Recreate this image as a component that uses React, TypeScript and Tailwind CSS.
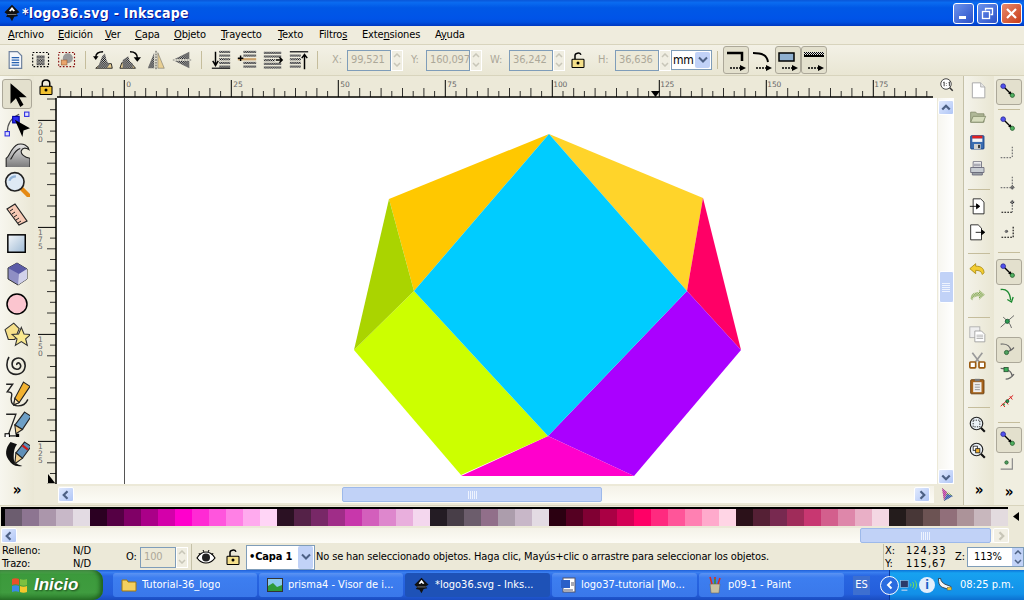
import React from 'react';

const FONT = "[font-family:'DejaVu_Sans_Condensed','DejaVu_Sans',sans-serif]";

// paleta de colores, tal cual aparece abajo
const PALETTE = [
  '#6c5d6f', '#8d7591', '#ab96ab', '#c8b8c8', '#e3dbe3',
  '#2b0022', '#550044', '#800066', '#aa0088', '#d400aa', '#ff00cc', '#ff2ad4', '#ff55dd', '#ff80e5', '#ffaaee', '#ffd5f6',
  '#2b1123', '#552248', '#782867', '#a02d88', '#c837ab', '#d35fbc', '#de87cd', '#e9afdd', '#f4d7ee',
  '#241c24', '#483e48', '#6c5d6c', '#916f8a', '#ac9dac', '#c8b7c8', '#e3dbe3',
  '#2b0011', '#550022', '#800033', '#aa0044', '#d40055', '#ff0066', '#ff2a7f', '#ff5599', '#ff80b2', '#ffaacc', '#ffd5e5',
  '#2b1119', '#552035', '#782950', '#a02c5a', '#c83771', '#d35f8d', '#de87aa', '#e9afc6', '#f4d7e3',
  '#241c1c', '#483737', '#6c5353', '#916f7a', '#ac9399', '#c8b7bd', '#e3dbdf',
];

const MENUS: [string, string, string, number][] = [
  ['', 'A', 'rchivo', 50],
  ['', 'E', 'dición', 47],
  ['', 'V', 'er', 30],
  ['', 'C', 'apa', 39],
  ['', 'O', 'bjeto', 47],
  ['', 'T', 'rayecto', 57],
  ['', 'T', 'exto', 41],
  ['Filtro', 's', '', 43],
  ['Exte', 'n', 'siones', 73],
  ['A', 'y', 'uda', 40],
];

const Svg = ({ s = 24, children, vb = '0 0 24 24' }: { s?: number; children: React.ReactNode; vb?: string }) => (
  <svg width={s} height={s} viewBox={vb} fill="none" className="block shrink-0">
    {children}
  </svg>
);

// --- iconos barra de comandos de arriba ---
const DocIcon = () => (
  <Svg s={20}>
    <path d="M5 2h10l5 5v15H5z" fill="#f4f6fa" stroke="#6b7f9c" strokeWidth="1.4" />
    <path d="M8 9h9M8 12h9M8 15h9M8 18h9" stroke="#2460b0" strokeWidth="1.5" />
  </Svg>
);
const SelAll = () => (
  <Svg s={20}>
    <rect x="2" y="3" width="19" height="17" stroke="#000" strokeWidth="1.4" strokeDasharray="2 2" />
    <path d="M7 7h9v3H7zM7 11h9v3H7zM7 15h9v3H7z" fill="url(#dither)" stroke="#555" strokeWidth=".5" />
  </Svg>
);
const SelDrawing = () => (
  <Svg s={20}>
    <rect x="2" y="3" width="19" height="17" stroke="#8a1010" strokeWidth="1.4" strokeDasharray="2 2" />
    <circle cx="13" cy="10" r="6" fill="#9a9a9a" />
    <rect x="5" y="12" width="7" height="6" fill="#e9a56c" stroke="#8a4a20" strokeWidth=".6" />
  </Svg>
);
const RotL = () => (
  <Svg s={22}>
    <path d="M3 21l6-5h11l1 5z" fill="#e8cf93" stroke="#222" />
    <path d="M5 21l5-13 3-3 2 8 3 4-3 4z" fill="url(#dither)" />
    <path d="M11 3C6 3 3 5 3 9" stroke="#000" strokeWidth="1.5" />
    <path d="M0 8h6l-3 4z" fill="#000" />
  </Svg>
);
const RotR = () => (
  <Svg s={22}>
    <path d="M1 21l2-6h10l5 6z" fill="#e8cf93" stroke="#222" />
    <path d="M4 21V12l6-4 2 6 3 2v5z" fill="url(#dither)" />
    <path d="M12 3c5 0 8 2 8 7" stroke="#000" strokeWidth="1.5" />
    <path d="M16 9h8l-4 5z" fill="#000" />
  </Svg>
);
const FlipH = () => (
  <Svg s={22}>
    <path d="M10 4v17H3z" fill="url(#dither)" />
    <path d="M14 4v17h7z" fill="#e8cf93" stroke="#555" strokeWidth=".5" />
    <path d="M12 2v20" stroke="#333" strokeDasharray="2 1" />
  </Svg>
);
const FlipV = () => (
  <Svg s={22}>
    <path d="M20 3v8H4z" fill="url(#dither)" />
    <path d="M20 21v-8H4z" fill="url(#dither)" />
    <path d="M2 12h20" stroke="#777" strokeDasharray="2 1" />
  </Svg>
);
const Lines = ({ x, w, ys }: { x: number; w: number; ys: number[] }) => (
  <>
    {ys.map((y) => (
      <rect key={y} x={x} y={y} width={w} height="2.4" fill="url(#dither)" />
    ))}
  </>
);
const Raise = () => (
  <Svg s={22}>
    <Lines x={10} w={12} ys={[2, 6, 10, 14, 18]} />
    <path d="M2 21h20" stroke="#333" strokeWidth="1.6" />
    <path d="M6 3v14M3 13l3 5 3-5" stroke="#000" strokeWidth="1.6" />
  </Svg>
);
const Lower = () => (
  <Svg s={22}>
    <Lines x={8} w={14} ys={[2, 6, 14, 18]} />
    <rect x="2" y="10" width="20" height="2.4" fill="#c9a06a" />
    <path d="M2 10h6M5 7v6" stroke="#000" strokeWidth="1.6" />
  </Svg>
);
const Up1 = () => (
  <Svg s={22}>
    <Lines x={2} w={19} ys={[3, 7, 15, 19]} />
    <Lines x={2} w={12} ys={[11]} />
    <path d="M15 12h7M19 9l3 3-3 3" stroke="#000" strokeWidth="1.6" />
  </Svg>
);
const Top = () => (
  <Svg s={22}>
    <path d="M2 3h20" stroke="#333" strokeWidth="1.6" />
    <Lines x={2} w={12} ys={[6, 10, 14, 18]} />
    <path d="M18 22V7M15 10l3-4 3 4" stroke="#000" strokeWidth="1.6" />
  </Svg>
);
const Padlock = ({ open = false }: { open?: boolean }) => (
  <Svg s={18}>
    <path d={open ? 'M8 12V6c0-3 6-5 8-1' : 'M7 12V7c0-6 10-6 10 0v5'} stroke="#000" strokeWidth="2" />
    <rect x="4" y="11" width="16" height="11" rx="1" fill={open ? '#f5e08a' : '#f2c230'} stroke="#000" strokeWidth="1.4" />
    <circle cx="12" cy="16" r="2" fill="#000" />
  </Svg>
);
const PathAB = ({ top, mid }: { top: React.ReactNode; mid?: boolean }) => (
  <Svg s={24}>
    {top}
    {mid && <path d="M2 4h20v3H2z" fill="url(#dither)" />}
    <path d="M6 20h12" stroke="#000" strokeWidth="1.6" strokeDasharray="2 1" />
    <path d="M16 17l6 3-6 3z" fill="#000" />
  </Svg>
);

// --- iconos caja de herramientas ---
const Arrow = () => (
  <Svg s={26}>
    <path d="M6 2v19l5-5 4 8 3-2-4-7h7z" fill="#000" />
  </Svg>
);
const Node = () => (
  <Svg s={26}>
    <path d="M3 20C3 11 7 6 14 3" stroke="#555" strokeWidth="1.2" />
    <rect x="8" y="5" width="6" height="6" fill="#2c2cf0" stroke="#0000a0" />
    <rect x="1" y="19" width="4" height="4" fill="#dfe0ff" stroke="#3030e0" />
    <rect x="19" y="1" width="4" height="4" fill="#dfe0ff" stroke="#3030e0" />
    <path d="M10 8l14 8-6 2-1 6z" fill="#000" />
  </Svg>
);
const Tweak = () => (
  <Svg s={26}>
    <defs>
      <linearGradient id="tw" x1="0" y1="0" x2="0" y2="1">
        <stop offset="0" stopColor="#e8e8e8" />
        <stop offset="1" stopColor="#777" />
      </linearGradient>
    </defs>
    <path d="M2 25V16C5 15 6 6 13 3c5-1 9 1 10 5-3-2-6-2-7 1s3 6 8 7v9z" fill="url(#tw)" stroke="#222" strokeWidth="1" />
    <path d="M6 17c2-2 3-8 9-10" stroke="#222" strokeWidth="1" />
  </Svg>
);
const ZoomTool = () => (
  <Svg s={26}>
    <path d="M15 15l8 8" stroke="#e58a14" strokeWidth="4" strokeLinecap="round" />
    <circle cx="10" cy="10" r="8.5" fill="#dfeaf5" stroke="#222" strokeWidth="1.5" />
    <path d="M5 9c1-3 3-4 6-4" stroke="#8fb1d6" strokeWidth="2" />
  </Svg>
);
const RulerTool = () => (
  <Svg s={24}>
    <path d="M2 7l8-5 12 17-8 4z" fill="#f6c9b4" stroke="#222" strokeWidth="1.2" />
    <path d="M5 9l3-2M7 12l3-2M9 15l3-2M11 18l3-2M13 21l3-2" stroke="#222" />
  </Svg>
);
const RectTool = () => (
  <Svg s={22}>
    <defs>
      <linearGradient id="rc" x1="0" y1="0" x2="1" y2="1">
        <stop offset="0" stopColor="#f4f7fb" />
        <stop offset="1" stopColor="#9db9d4" />
      </linearGradient>
    </defs>
    <rect x="2" y="2" width="19" height="19" fill="url(#rc)" stroke="#000" strokeWidth="1.6" />
  </Svg>
);
const BoxTool = () => (
  <Svg s={24}>
    <path d="M12 1l10 6v10l-9 6-10-6V6z" fill="#8f8fc4" stroke="#333" />
    <path d="M3 6l9-5 10 6-8 5z" fill="#5b5ba6" />
    <path d="M14 12l8-5v10l-9 6z" fill="#d2d2ea" />
  </Svg>
);
const CircleTool = () => (
  <Svg s={24}>
    <circle cx="12" cy="12" r="10" fill="#fbc5cf" stroke="#000" strokeWidth="1.5" />
  </Svg>
);
const StarTool = () => (
  <Svg s={26}>
    <path d="M1 8l8-6 5 5-4 10-6 0z" fill="#f6e08a" stroke="#333" />
    <path d="M16 6l2.5 6 6 .5-4.5 4 1.5 6-5.5-3.5-5.500 3.500 1.500-6-4.500-4 6-.5z" fill="#f9e88e" stroke="#333" />
  </Svg>
);
const Spiral = () => (
  <Svg s={24}>
    <path d="M12 13c-1-2 2-3 3-1 2 3-1 6-4 5-5-1-5-8-1-10 6-3 11 2 10 8-1 7-9 9-14 6C1 18 1 10 4 5" stroke="#222" strokeWidth="1.6" />
  </Svg>
);
const Pencil = () => (
  <Svg s={26}>
    <path d="M2 3h6L3 10c3 0 5 1 4 4s-1 9 6 9 8-4 9-6" stroke="#222" strokeWidth="1.3" />
    <path d="M18 1l6 4-10 15-5 2 1-6z" fill="#f2b230" stroke="#222" />
    <path d="M9 22l1-6 4 4z" fill="#f8e5c0" stroke="#222" />
  </Svg>
);
const Pen = () => (
  <Svg s={26}>
    <path d="M2 3h9L4 22" stroke="#222" strokeWidth="1.2" />
    <rect x="1" y="21" width="4" height="4" fill="#fff" stroke="#000" />
    <rect x="11" y="21" width="3" height="3" fill="#000" />
    <path d="M5 23h7" stroke="#000" />
    <path d="M19 1l6 4-8 12-7-4z" fill="#6d9fc6" stroke="#222" />
    <path d="M10 13l7 4-6 4z" fill="#f0d090" stroke="#222" />
  </Svg>
);
const Calli = () => (
  <Svg s={26}>
    <path d="M6 1c-5 6-5 12-2 16s5 7 13 6c-5-1-8-3-8-7 0-5 0-9 3-13z" fill="#111" />
    <path d="M19 1l6 4-8 11-6-5z" fill="#5f8fb8" stroke="#222" />
    <path d="M17 4l5 4" stroke="#d01818" strokeWidth="2" />
    <path d="M11 11l6 5-7 5z" fill="#f0d090" stroke="#222" />
  </Svg>
);
const Chevrons = () => <span className="block text-[15px] font-bold leading-none text-black">»</span>;

// --- iconos columna derecha ---
const NewDoc = () => (
  <Svg s={20}>
    <path d="M4 1h10l5 5v13H4z" fill="#fff" stroke="#aaa" strokeWidth="1.2" />
    <path d="M14 1v5h5" fill="#e8e8e8" stroke="#aaa" />
  </Svg>
);
const Folder = () => (
  <Svg s={20}>
    <path d="M2 5h6l2 2h8v10H2z" fill="#b0b898" stroke="#808868" />
    <path d="M2 17l3-7h15l-3 7z" fill="#d6dcbc" stroke="#808868" />
  </Svg>
);
const Save = () => (
  <Svg s={20}>
    <rect x="2" y="2" width="16" height="16" rx="1" fill="#3a6cb0" stroke="#123a80" />
    <rect x="4" y="2" width="12" height="3.500" fill="#e02020" />
    <rect x="4" y="5.500" width="12" height="4" fill="#f4f4f4" />
    <rect x="6" y="12" width="8" height="6" fill="#d0d0d0" />
    <rect x="11" y="13" width="2" height="4" fill="#222" />
  </Svg>
);
const Print = () => (
  <Svg s={20}>
    <path d="M5 2h10v7H5z" fill="#fff" stroke="#667" />
    <path d="M6 5h8M6 7h8" stroke="#667" />
    <path d="M2 9h16v6H2z" fill="#c8cdd2" stroke="#667" />
    <path d="M4 15h12v3H4z" fill="#9aa0a6" stroke="#667" />
  </Svg>
);
const Import = () => (
  <Svg s={20}>
    <path d="M5 1h9l4 4v14H5z" fill="#fff" stroke="#111" />
    <path d="M1 10h11M9 7l4 3-4 3z" stroke="#000" fill="#000" />
  </Svg>
);
const Export = () => (
  <Svg s={20}>
    <path d="M2 1h9l4 4v14H2z" fill="#fff" stroke="#111" />
    <path d="M8 10h10M15 7l4 3-4 3z" stroke="#000" fill="#000" />
  </Svg>
);
const Undo = () => (
  <Svg s={20}>
    <path d="M8 2L1 8l7 6v-4c4 0 7 1 8 5l2-2c0-6-4-8-10-8z" fill="#f2cc30" stroke="#a88810" />
  </Svg>
);
const Redo = () => (
  <Svg s={20}>
    <path d="M12 2l7 6-7 6v-4c-4 0-7 1-8 5l-2-2c0-6 4-8 10-8z" fill="url(#ditherg)" />
  </Svg>
);
const Copy = () => (
  <Svg s={20}>
    <rect x="1" y="1" width="12" height="13" fill="#eee" stroke="#aaa" />
    <path d="M7 6h8l4 4v9H7z" fill="#fff" stroke="#999" />
    <path d="M9 11h8M9 13h8M9 15h8" stroke="#aaa" />
  </Svg>
);
const Cut = () => (
  <Svg s={20}>
    <path d="M4 1l9 12M16 1L7 13" stroke="#9a9a9a" strokeWidth="2" />
    <rect x="1" y="12" width="7" height="7" rx="1" fill="#fff" stroke="#9a5a10" strokeWidth="2" />
    <rect x="12" y="12" width="7" height="7" rx="1" fill="#fff" stroke="#9a5a10" strokeWidth="2" />
  </Svg>
);
const Paste = () => (
  <Svg s={20}>
    <rect x="2" y="2" width="16" height="17" rx="1" fill="#a8641c" stroke="#603608" />
    <rect x="5" y="5" width="10" height="12" fill="#eee" />
    <rect x="7" y="1" width="6" height="3" fill="#777" />
    <path d="M7 8h6M7 11h6M7 14h6" stroke="#888" />
  </Svg>
);
const ZoomSel = () => (
  <Svg s={20}>
    <path d="M13 13l6 6" stroke="#111" strokeWidth="2.500" />
    <circle cx="9" cy="9" r="7.500" fill="#eaf1f7" stroke="#222" strokeWidth="1.400" />
    <rect x="5" y="5" width="8" height="8" stroke="#000" strokeDasharray="1.500 1.500" />
  </Svg>
);
const ZoomDraw = () => (
  <Svg s={20}>
    <path d="M13 13l6 6" stroke="#111" strokeWidth="2.500" />
    <circle cx="9" cy="9" r="7.500" fill="#eaf1f7" stroke="#222" strokeWidth="1.400" />
    <rect x="5" y="5" width="5" height="5" fill="#fff" stroke="#222" />
    <rect x="8" y="8" width="5" height="5" fill="#f2b230" stroke="#222" />
  </Svg>
);
const Zoom11 = () => (
  <Svg s={18}>
    <path d="M12 12l5 5" stroke="#333" strokeWidth="2" />
    <circle cx="8" cy="8" r="7" fill="#fff" stroke="#333" strokeWidth="1.200" />
    <path d="M4.500 6l1-.8V11M11.500 6l1-.8V11M8.500 7v.8M8.500 9.500v.8" stroke="#000" strokeWidth="1" />
  </Svg>
);

// iconos de ajuste (snap)
const SnapMain = () => (
  <Svg s={20}>
    <path d="M6 6l9 9" stroke="#000" strokeWidth="1.600" />
    <path d="M11 14l5 2-2-5z" fill="#000" />
    <circle cx="5" cy="5" r="2.800" fill="#5050f0" stroke="#303090" />
    <circle cx="16" cy="16" r="2.500" fill="#50b060" stroke="#286030" />
  </Svg>
);
const SnapDots = ({ d }: { d: number }) => (
  <Svg s={20}>
    {d === 0 && <path d="M2 15h13M16 2v13" stroke="#777" strokeWidth="1.500" strokeDasharray="2 1.500" />}
    {d === 1 && (
      <>
        <path d="M2 15h13M16 2v13" stroke="#777" strokeWidth="1.500" strokeDasharray="2 1.500" />
        <path d="M16 12l3 3-3 3-3-3z" fill="url(#dither)" />
      </>
    )}
    {d === 2 && (
      <>
        <path d="M3 17h13" stroke="#000" strokeWidth="1.300" strokeDasharray="2 1.500" />
        <path d="M16 5v12" stroke="#777" strokeWidth="1.500" strokeDasharray="2 1.500" />
        <path d="M16 2l3 3-3 3-3-3z" fill="url(#dither)" />
      </>
    )}
    {d === 3 && (
      <>
        <path d="M3 17h14V4" stroke="#000" strokeWidth="1.300" strokeDasharray="2 1.500" />
        <circle cx="9" cy="10" r="2" fill="url(#dither)" />
      </>
    )}
  </Svg>
);
const SnapCurve = ({ k }: { k: number }) => (
  <Svg s={20}>
    {k === 0 && (
      <>
        <path d="M2 3c7-1 11 3 12 13" stroke="#1c8a30" strokeWidth="1.600" />
        <path d="M17 12l-2 6-5-3" stroke="#1c8a30" strokeWidth="1.600" />
      </>
    )}
    {k === 1 && (
      <>
        <path d="M2 17L18 3M5 5c4 3 9 8 10 13" stroke="#555" strokeWidth="1" />
        <circle cx="10" cy="10" r="2.500" fill="#2c9a50" stroke="#185030" />
      </>
    )}
    {k === 2 && (
      <>
        <path d="M2 5c8-1 12 3 12 8M9 14c3 0 6-2 9-5" stroke="#666" strokeWidth="1.400" />
        <circle cx="9" cy="15" r="2.500" fill="#50a060" stroke="#286030" />
      </>
    )}
    {k === 3 && (
      <>
        <path d="M2 4c8 0 14 4 14 10M8 17c3 0 7-2 10-6" stroke="#666" strokeWidth="1.400" />
        <rect x="6" y="3" width="5" height="5" fill="#3cae58" stroke="#285030" />
      </>
    )}
    {k === 4 && (
      <>
        <path d="M2 17L17 4M4 14l3 4M8 11l3 4M13 5l3 4" stroke="#d82020" strokeWidth="1.200" />
        <circle cx="10" cy="11" r="1.800" fill="#2c9a50" stroke="#185030" />
        <circle cx="6" cy="15" r="1.200" fill="#2c9a50" />
      </>
    )}
    {k === 5 && (
      <>
        <path d="M2 17h14V4" stroke="#888" strokeWidth="1.400" />
        <circle cx="9" cy="9" r="2" fill="#50a060" stroke="#286030" />
      </>
    )}
  </Svg>
);

const Logo = ({ s = 18 }: { s?: number }) => (
  <Svg s={s}>
    <path d="M12 1l10 10-4 2 2 3-5 1-3 6-3-5-5-1 2-3-4-3z" fill="#111" />
    <path d="M12 4l-4 5 2 1 2-2 2 2 2-1z" fill="#fff" />
    <path d="M6 14h12" stroke="#999" strokeWidth="1" />
  </Svg>
);

const Btn = ({ pressed, children, className }: { pressed?: boolean; children: React.ReactNode; className?: string }) => (
  <div
    className={`flex shrink-0 items-center justify-center rounded-[3px] ${
      pressed ? 'border border-[#aca899] bg-[#e3e0cd]' : 'border border-transparent'
    } ${className ?? ''}`}
  >
    {children}
  </div>
);

const Sep = () => <div className="h-[18px] w-[1px] bg-[#c5bd9c]" />;
const HSep = () => <div className="h-[1px] w-[22px] bg-[#c5bd9c]" />;

const Spin = ({ value, w = 44 }: { value: string; w?: number }) => (
  <div className="flex h-[21px] items-stretch">
    <div
      className="flex items-center border border-[#7f9db9] bg-[#ece9d8] pl-[3px] text-[#aca899]"
      style={{ width: w }}
    >
      {value}
    </div>
    <div className="flex w-[12px] flex-col items-center justify-around border border-white bg-[#f0eee2] text-[#c8c6b8]">
      <svg width="8" height="5" viewBox="0 0 8 5"><path d="M1 4l3-3 3 3" stroke="currentColor" strokeWidth="1.500" fill="none" /></svg>
      <svg width="8" height="5" viewBox="0 0 8 5"><path d="M1 1l3 3 3-3" stroke="currentColor" strokeWidth="1.500" fill="none" /></svg>
    </div>
  </div>
);

const ChevBtn = ({ dir, off, className }: { dir: 'up' | 'down' | 'left' | 'right'; off?: boolean; className?: string }) => {
  const d = { up: 'M3 10l5-5 5 5', down: 'M3 6l5 5 5-5', left: 'M10 3l-5 5 5 5', right: 'M6 3l5 5-5 5' }[dir];
  return (
    <div
      className={`flex h-[15px] w-[16px] shrink-0 items-center justify-center rounded-[2px] border border-white ${
        off ? 'bg-[#f1efe4]' : 'bg-[linear-gradient(135deg,#e1eafe,#b0c6f6)]'
      } ${className ?? ''}`}
    >
      <svg width="12" height="12" viewBox="0 0 16 16">
        <path d={d} stroke={off ? '#c8c6b8' : '#4d6185'} strokeWidth="3" fill="none" />
      </svg>
    </div>
  );
};

const RulerTop = () => {
  const ticks = Array.from({ length: 83 }, (_, i) => i);
  const labels: [number, string][] = [
    [124.3, '0'], [231.3, '25'], [338.3, '50'], [445.3, '75'], [551.3, '100'], [658.3, '125'], [765.3, '150'], [872.3, '175'],
  ];
  return (
    <svg width="876" height="22" viewBox="57 76 876 22" className="block shrink-0">
      <path d="M57 97h876" stroke="#000" strokeWidth="1.500" />
      {ticks.map((i) => {
        const x = 60.1 + i * 10.7;
        const n = Math.round((x - 124.3) / 10.7);
        const major = ((n % 10) + 10) % 10 === 0;
        const mid = ((n % 2) + 2) % 2 === 0;
        return <path key={i} d={`M${x} 97V${major ? 80 : mid ? 88 : 91}`} stroke="#000" strokeWidth={major ? 1 : 0.8} />;
      })}
      {labels.map(([x, t]) => (
        <text key={t} x={x + 2} y={87} fontSize="7.500" fill="#666" fontFamily="DejaVu Sans">{t}</text>
      ))}
      <path d="M651 91h9l-4.500 6z" fill="#000" />
    </svg>
  );
};

const RulerLeft = () => {
  const ticks = Array.from({ length: 37 }, (_, i) => i);
  const labels: [number, string[]][] = [
    [120, ['2', '0', '0']], [227, ['1', '7', '5']], [334, ['1', '5', '0']], [441, ['1', '2', '5']],
  ];
  return (
    <svg width="23" height="386" viewBox="34 98 23 386" className="block shrink-0">
      <path d="M56 98v386" stroke="#000" strokeWidth="1.500" />
      {ticks.map((i) => {
        const y = 99 + i * 10.7;
        const n = Math.round((y - 120) / 10.7);
        const major = ((n % 10) + 10) % 10 === 0;
        const mid = ((n % 2) + 2) % 2 === 0;
        return <path key={i} d={`M56 ${y}H${major ? 38 : mid ? 47 : 50}`} stroke="#000" strokeWidth={major ? 1 : 0.8} />;
      })}
      {labels.map(([y, t]) =>
        t.map((c, i) => (
          <text key={`${y}${i}`} x={38} y={y + 8 + i * 7} fontSize="7.500" fill="#666" fontFamily="DejaVu Sans">{c}</text>
        )),
      )}
      <path d="M48 474l7 9h-7z" fill="#000" />
    </svg>
  );
};

const TaskBtn = ({ w, active, icon, label }: { w: number; active?: boolean; icon: React.ReactNode; label: string }) => (
  <div
    className={`flex h-[24px] shrink-0 items-center gap-[5px] rounded-[3px] pl-[8px] text-white ${
      active ? 'bg-[#1e52b7]' : 'bg-[linear-gradient(180deg,#5b93f3,#3d7ef0_20%,#3a78ea)]'
    }`}
    style={{ width: w }}
  >
    {icon}
    <span className="truncate">{label}</span>
  </div>
);

const Grip = () => (
  <div className="h-[8px] w-[9px] bg-[repeating-linear-gradient(90deg,#eef3fe_0_1px,transparent_1px_2px)]" />
);

export default function App() {
  return (
    <div className={`flex h-[600px] w-[1024px] flex-col overflow-hidden bg-[#ece9d8] text-[11px] tracking-[-0.15px] text-black ${FONT}`}>
      <svg className="absolute h-0 w-0">
        <defs>
          <pattern id="dither" width="2" height="2" patternUnits="userSpaceOnUse">
            <rect width="2" height="2" fill="#ddd" />
            <rect width="1" height="1" fill="#000" />
            <rect x="1" y="1" width="1" height="1" fill="#000" />
          </pattern>
          <pattern id="ditherg" width="2" height="2" patternUnits="userSpaceOnUse">
            <rect width="2" height="2" fill="#6c9a3a" />
            <rect width="1" height="1" fill="#e8e8d0" />
            <rect x="1" y="1" width="1" height="1" fill="#e8e8d0" />
          </pattern>
        </defs>
      </svg>

      {/* barra de titulo */}
      <div className="flex h-[26px] shrink-0 items-center bg-[linear-gradient(180deg,#0a56d8_0%,#0a6bf0_10%,#0058e6_30%,#0054e8_70%,#0050e0_85%,#0038c0_100%)] pl-[3px]">
        <Logo />
        <span className="ml-[1px] flex-1 text-[14px] font-bold tracking-[0.25px] text-white [text-shadow:1px_1px_#0f1089]">*logo36.svg - Inkscape</span>
        <div className="flex items-center gap-[3px] pr-[2px]">
          <div className="relative h-[21px] w-[21px] rounded-[3px] border border-white bg-[linear-gradient(135deg,#6d93ec,#2a50c8)]">
            <div className="absolute bottom-[4px] left-[5px] h-[3px] w-[7px] bg-white" />
          </div>
          <div className="flex h-[21px] w-[21px] items-center justify-center rounded-[3px] border border-white bg-[linear-gradient(135deg,#6d93ec,#2a50c8)]">
            <svg width="13" height="13" viewBox="0 0 13 13" fill="none">
              <path d="M4.500 3.500V1.500h7v6h-2" stroke="#fff" strokeWidth="1.300" />
              <rect x="1.500" y="4.500" width="7" height="7" stroke="#fff" strokeWidth="1.300" />
            </svg>
          </div>
          <div className="flex h-[21px] w-[21px] items-center justify-center rounded-[3px] border border-white bg-[linear-gradient(135deg,#e88a6c,#c83c18)]">
            <svg width="13" height="13" viewBox="0 0 13 13"><path d="M2 2l9 9M11 2l-9 9" stroke="#fff" strokeWidth="2.200" /></svg>
          </div>
        </div>
      </div>

      {/* menu */}
      <div className="flex h-[19px] shrink-0 items-center border-b border-[#d8d4bd] bg-[#efecdd] pl-[8px]">
        {MENUS.map(([a, u, b, w]) => (
          <span key={a + u + b} className="shrink-0" style={{ width: w }}>
            {a}
            <span className="underline">{u}</span>
            {b}
          </span>
        ))}
      </div>

      {/* barra de comandos */}
      <div className="flex h-[31px] shrink-0 items-center border-b border-[#d8d4bd] bg-[linear-gradient(180deg,#f3f1e6,#e9e6d3)] pl-[2px]">
        <div className="flex w-[26px] justify-center"><DocIcon /></div>
        <div className="flex w-[26px] justify-center"><SelAll /></div>
        <div className="flex w-[26px] justify-center"><SelDrawing /></div>
        <div className="mx-[5px]"><Sep /></div>
        <div className="flex w-[26px] justify-center"><RotL /></div>
        <div className="flex w-[26px] justify-center"><RotR /></div>
        <div className="flex w-[26px] justify-center"><FlipH /></div>
        <div className="flex w-[26px] justify-center"><FlipV /></div>
        <div className="mx-[6px]"><Sep /></div>
        <div className="flex w-[26px] justify-center"><Raise /></div>
        <div className="flex w-[26px] justify-center"><Lower /></div>
        <div className="flex w-[26px] justify-center"><Up1 /></div>
        <div className="flex w-[26px] justify-center"><Top /></div>
        <div className="mx-[5px]"><Sep /></div>
        <span className="ml-[9px] w-[15px] text-[#aca899]">X:</span>
        <Spin value="99,521" />
        <span className="ml-[8px] w-[15px] text-[#aca899]">Y:</span>
        <Spin value="160,097" />
        <span className="ml-[8px] w-[19px] text-[#aca899]">W:</span>
        <Spin value="36,242" />
        <div className="ml-[2px] flex w-[22px] justify-center"><Padlock open /></div>
        <span className="ml-[9px] w-[17px] text-[#aca899]">H:</span>
        <Spin value="36,636" />
        <div className="flex h-[20px] w-[41px] items-center justify-between border border-[#7f9db9] bg-white pl-[1px] pr-[1px] text-[12px]">
          mm
          <div className="flex h-[16px] w-[15px] items-center justify-center rounded-[2px] bg-[#c1d2f7]">
            <svg width="10" height="8" viewBox="0 0 10 8"><path d="M1 1.500l4 4 4-4" stroke="#4d6185" strokeWidth="2" fill="none" /></svg>
          </div>
        </div>
        <div className="mx-[5px]"><Sep /></div>
        <Btn pressed className="h-[28px] w-[26px]">
          <PathAB top={<path d="M3 5h15v8" stroke="#000" strokeWidth="2.500" />} />
        </Btn>
        <Btn className="h-[28px] w-[26px]">
          <PathAB top={<path d="M3 5c9 0 14 2 15 9" stroke="#000" strokeWidth="2" />} />
        </Btn>
        <Btn pressed className="h-[28px] w-[26px]">
          <PathAB top={<path d="M3 5h15v8H3z" fill="#8fb0d0" stroke="#000" strokeWidth="1.500" />} />
        </Btn>
        <Btn pressed className="h-[28px] w-[26px]">
          <PathAB mid top={<path d="M2 8h20" stroke="#000" strokeWidth="2" />} />
        </Btn>
      </div>

      {/* zona central */}
      <div className="flex min-h-0 flex-1">
        {/* herramientas */}
        <div className="flex w-[34px] shrink-0 flex-col items-center bg-[linear-gradient(90deg,#f7f6ee,#eae7d5)] pt-[3px]">
          <Btn pressed className="h-[30px] w-[30px]"><Arrow /></Btn>
          <div className="flex h-[30px] shrink-0 items-center"><Node /></div>
          <div className="flex h-[30px] shrink-0 items-center"><Tweak /></div>
          <div className="flex h-[30px] shrink-0 items-center"><ZoomTool /></div>
          <div className="flex h-[30px] shrink-0 items-center"><RulerTool /></div>
          <div className="flex h-[30px] shrink-0 items-center"><RectTool /></div>
          <div className="flex h-[30px] shrink-0 items-center"><BoxTool /></div>
          <div className="flex h-[30px] shrink-0 items-center"><CircleTool /></div>
          <div className="flex h-[30px] shrink-0 items-center"><StarTool /></div>
          <div className="flex h-[30px] shrink-0 items-center"><Spiral /></div>
          <div className="flex h-[30px] shrink-0 items-center"><Pencil /></div>
          <div className="flex h-[30px] shrink-0 items-center"><Pen /></div>
          <div className="flex h-[30px] shrink-0 items-center"><Calli /></div>
          <div className="mt-[14px]"><Chevrons /></div>
        </div>

        {/* lienzo con reglas */}
        <div className="flex w-[929px] shrink-0 flex-col">
          <div className="flex h-[22px] shrink-0">
            <div className="flex w-[23px] shrink-0 items-center justify-center pl-[1px]"><Padlock /></div>
            <RulerTop />
            <div className="flex flex-1 items-center justify-center pl-[2px]"><Zoom11 /></div>
          </div>
          <div className="flex h-[386px] shrink-0">
            <RulerLeft />
            <div className="h-[386px] w-[880px] shrink-0 bg-white">
              <svg width="880" height="386" viewBox="57 98 880 386" className="block">
                <path d="M124.500 98v386" stroke="#555" />
                <path d="M549 134L389 199l25 92z" fill="#ffc800" />
                <path d="M549 134l154 64-16 93z" fill="#ffd42a" />
                <path d="M703 198l38 152-54-59z" fill="#ff0066" />
                <path d="M687 291l54 59-107 126-86-40z" fill="#aa00ff" />
                <path d="M548 436l86 40H461z" fill="#ff00cc" />
                <path d="M414 291l134 145-87 39-107-125z" fill="#ccff00" />
                <path d="M389 199l25 92-60 59z" fill="#aad400" />
                <path d="M549 134l138 157-139 145-134-145z" fill="#00ccff" />
              </svg>
            </div>
            <div className="flex flex-1 pl-[1px]">
              <div className="flex h-[386px] w-[16px] flex-col items-center bg-[linear-gradient(90deg,#f7f6f0,#fff)] pt-[2px]">
                <ChevBtn dir="up" />
                <div className="mt-[156px] flex h-[32px] w-[15px] items-center justify-center rounded-[2px] border border-white bg-[#c1d2f7]">
                  <div className="h-[9px] w-[8px] bg-[repeating-linear-gradient(180deg,#eef3fe_0_1px,transparent_1px_2px)]" />
                </div>
                <ChevBtn dir="down" className="mt-auto" />
              </div>
            </div>
          </div>
          <div className="flex h-[21px] shrink-0 items-center">
            <div className="w-[24px] shrink-0" />
            <div className="flex h-[17px] w-[876px] shrink-0 items-center bg-[linear-gradient(180deg,#f4f2e8,#fdfcf6)]">
              <ChevBtn dir="left" />
              <div className="ml-[268px] flex h-[15px] w-[260px] items-center justify-center rounded-[2px] border border-[#9db9ea] bg-[#c1d2f7]">
                <Grip />
              </div>
              <div className="flex-1" />
              <ChevBtn dir="right" className="mr-[4px]" />
            </div>
            <div className="ml-[3px] flex w-[20px] justify-center">
              <svg width="14" height="15" viewBox="0 0 14 15">
                <path d="M2 1l11 8-9 5z" fill="url(#ditherg)" />
                <path d="M2 1l5 4-3 9z" fill="#d030c0" opacity=".7" />
                <path d="M7 7l6 2-9 5z" fill="#3050d0" opacity=".7" />
              </svg>
            </div>
          </div>
        </div>

        {/* comandos y ajustes */}
        <div className="flex w-[61px] shrink-0 border-l border-[#c5c1a8]">
          <div className="flex w-[30px] shrink-0 flex-col items-center bg-[linear-gradient(90deg,#f4f3ea,#e9e6d3)] pt-[3px]">
            <div className="flex h-[26px] shrink-0 items-center"><NewDoc /></div>
            <div className="flex h-[26px] shrink-0 items-center"><Folder /></div>
            <div className="flex h-[26px] shrink-0 items-center"><Save /></div>
            <div className="flex h-[26px] shrink-0 items-center"><Print /></div>
            <div className="flex h-[12px] shrink-0 items-center"><HSep /></div>
            <div className="flex h-[26px] shrink-0 items-center"><Import /></div>
            <div className="flex h-[26px] shrink-0 items-center"><Export /></div>
            <div className="flex h-[12px] shrink-0 items-center"><HSep /></div>
            <div className="flex h-[26px] shrink-0 items-center"><Undo /></div>
            <div className="flex h-[26px] shrink-0 items-center"><Redo /></div>
            <div className="flex h-[12px] shrink-0 items-center"><HSep /></div>
            <div className="flex h-[26px] shrink-0 items-center"><Copy /></div>
            <div className="flex h-[26px] shrink-0 items-center"><Cut /></div>
            <div className="flex h-[26px] shrink-0 items-center"><Paste /></div>
            <div className="flex h-[12px] shrink-0 items-center"><HSep /></div>
            <div className="flex h-[26px] shrink-0 items-center"><ZoomSel /></div>
            <div className="flex h-[26px] shrink-0 items-center"><ZoomDraw /></div>
            <div className="mt-[18px]"><Chevrons /></div>
          </div>
          <div className="flex flex-1 flex-col items-center bg-[#f0eee0] pt-[3px]">
            <Btn pressed className="h-[26px] w-[26px]"><SnapMain /></Btn>
            <div className="flex h-[9px] shrink-0 items-center"><HSep /></div>
            <div className="flex h-[22px] shrink-0 items-center"><SnapMain /></div>
            <div className="flex h-[38px] shrink-0 items-center"><SnapDots d={0} /></div>
            <div className="flex h-[22px] shrink-0 items-center"><SnapDots d={1} /></div>
            <div className="flex h-[24px] shrink-0 items-center"><SnapDots d={2} /></div>
            <div className="flex h-[26px] shrink-0 items-center"><SnapDots d={3} /></div>
            <div className="flex h-[13px] shrink-0 items-center"><HSep /></div>
            <Btn pressed className="h-[26px] w-[26px]"><SnapMain /></Btn>
            <div className="flex h-[24px] shrink-0 items-center"><SnapCurve k={0} /></div>
            <div className="flex h-[28px] shrink-0 items-center"><SnapCurve k={1} /></div>
            <Btn pressed className="h-[26px] w-[26px]"><SnapCurve k={2} /></Btn>
            <div className="flex h-[24px] shrink-0 items-center"><SnapCurve k={3} /></div>
            <div className="flex h-[30px] shrink-0 items-center"><SnapCurve k={4} /></div>
            <div className="flex h-[10px] shrink-0 items-center"><HSep /></div>
            <Btn pressed className="h-[26px] w-[26px]"><SnapMain /></Btn>
            <div className="flex h-[24px] shrink-0 items-center"><SnapCurve k={5} /></div>
            <div className="mt-[8px]"><Chevrons /></div>
          </div>
        </div>
      </div>

      {/* paleta */}
      <div className="flex h-[22px] shrink-0 items-start border-t border-[#d8d4bd] pt-[1px]">
        <div className="ml-[1px] flex h-[19px] border-l-[4px] border-t-2 border-black">
          {PALETTE.map((c, i) => (
            <div key={i} className="h-full w-[17px]" style={{ backgroundColor: c }} />
          ))}
        </div>
        <div className="flex h-[19px] flex-1 items-center justify-center">
          <svg width="6" height="9" viewBox="0 0 6 9"><path d="M6 0v9L0 4.500z" fill="#000" /></svg>
        </div>
      </div>
      <div className="flex h-[17px] shrink-0 items-center pl-[1px] pr-[15px]">
        <div className="flex h-[15px] flex-1 items-center bg-[linear-gradient(180deg,#f4f2e8,#fdfcf6)]">
          <ChevBtn dir="left" />
          <div className="flex-1" />
          <div className="flex h-[15px] w-[131px] items-center justify-center rounded-[2px] border border-[#9db9ea] bg-[#c1d2f7]">
            <Grip />
          </div>
          <ChevBtn dir="right" off className="ml-[2px]" />
        </div>
      </div>

      {/* barra de estado */}
      <div className="flex h-[26px] shrink-0 items-center text-[12px]">
        <div className="flex w-[124px] shrink-0 flex-col pl-[2px] text-[11px] leading-[13px]">
          <div className="flex"><span className="w-[71px]">Relleno:</span><span>N/D</span></div>
          <div className="flex"><span className="w-[71px]">Trazo:</span><span>N/D</span></div>
        </div>
        <span className="ml-[2px] w-[14px] text-[11px]">O:</span>
        <div className="text-[11px]"><Spin value="100" w={36} /></div>
        <div className="ml-[3px] h-[26px] w-[1px] bg-[#c5c1a8]" />
        <div className="ml-[1px] flex w-[26px] justify-center">
          <svg width="20" height="16" viewBox="0 0 20 16">
            <path d="M1 9c3-5 6-6 9-6s6 1 9 6c-3 4-6 5-9 5s-6-1-9-5z" fill="#fff" stroke="#000" strokeWidth="1.200" />
            <circle cx="10" cy="8.500" r="4" fill="#222" />
            <path d="M3 4l1 2M7 1l1 2M13 1l-1 2M17 4l-1 2" stroke="#000" />
          </svg>
        </div>
        <div className="flex w-[27px] justify-center"><Padlock open /></div>
        <div className="flex h-[25px] w-[69px] shrink-0 items-center justify-between border border-[#7f9db9] bg-white pl-[2px] pr-[1px] text-[11px] font-bold">
          •Capa 1
          <div className="flex h-[23px] w-[15px] items-center justify-center rounded-[2px] bg-[#c1d2f7]">
            <svg width="10" height="8" viewBox="0 0 10 8"><path d="M1 1.500l4 4 4-4" stroke="#4d6185" strokeWidth="2" fill="none" /></svg>
          </div>
        </div>
        <span className="ml-[1px] w-[567px] shrink-0 whitespace-nowrap text-[11px]">No se han seleccionado objetos. Haga clic, Mayús+clic o arrastre para seleccionar los objetos.</span>
        <div className="h-[26px] w-[1px] bg-[#c5c1a8]" />
        <div className="flex w-[71px] shrink-0 flex-col pl-[1px] text-[11px] leading-[13px]">
          <div className="flex"><span className="w-[21px]">X:</span><span className="tracking-[1px]">124,33</span></div>
          <div className="flex"><span className="w-[21px]">Y:</span><span className="tracking-[1px]">115,67</span></div>
        </div>
        <span className="w-[12px] text-[11px]">Z:</span>
        <div className="flex h-[20px] flex-1 items-stretch border border-[#7f9db9] bg-white pl-[6px] text-[11px]">
          <span className="flex-1 self-center">113%</span>
          <div className="flex w-[11px] flex-col items-center justify-around bg-[#c1d2f7]">
            <svg width="8" height="5" viewBox="0 0 8 5"><path d="M1 4l3-3 3 3" stroke="#4d6185" strokeWidth="1.500" fill="none" /></svg>
            <svg width="8" height="5" viewBox="0 0 8 5"><path d="M1 1l3 3 3-3" stroke="#4d6185" strokeWidth="1.500" fill="none" /></svg>
          </div>
        </div>
      </div>

      {/* barra de tareas */}
      <div className="flex h-[30px] shrink-0 items-center bg-[linear-gradient(180deg,#1f5fd8_0%,#3a7ff0_8%,#2866e2_20%,#245edb_80%,#1a4cc0_100%)] tracking-normal">
        <div className="flex h-[30px] w-[103px] shrink-0 items-center gap-[5px] rounded-r-[10px] bg-[linear-gradient(180deg,#5ba85b_0%,#3c9a3c_15%,#3f9c3f_75%,#2c7a2c_100%)] pl-[11px] shadow-[inset_-3px_0_4px_#1f5f1f]">
          <svg width="18" height="18" viewBox="0 0 18 18">
            <path d="M1 3c2-1 5-1 7 0v6c-2-1-5-1-7 0z" fill="#e8502a" />
            <path d="M9 3c2 1 5 1 7 0v6c-2 1-5 1-7 0z" fill="#7cc040" />
            <path d="M1 10c2-1 5-1 7 0v6c-2-1-5-1-7 0z" fill="#3a8ae8" />
            <path d="M9 10c2 1 5 1 7 0v6c-2 1-5 1-7 0z" fill="#f6c82c" />
          </svg>
          <span className="text-[17px] font-bold italic text-white [font-family:'Liberation_Sans',sans-serif] [text-shadow:1px_1px_2px_#1a4a1a]">Inicio</span>
        </div>
        <div className="ml-[10px] flex items-center gap-[2px]">
          <TaskBtn
            w={144}
            label="Tutorial-36_logo"
            icon={
              <svg width="16" height="14" viewBox="0 0 16 14" className="shrink-0">
                <path d="M1 2h5l1 2h8v9H1z" fill="#f4d060" stroke="#a07810" />
              </svg>
            }
          />
          <TaskBtn
            w={144}
            label="prisma4 - Visor de i..."
            icon={
              <svg width="16" height="14" viewBox="0 0 16 14" className="shrink-0">
                <rect x=".5" y=".5" width="15" height="13" fill="#8ac8f0" stroke="#333" />
                <path d="M1 13V8l5-3 4 4 5-2v6z" fill="#2e9a3a" />
              </svg>
            }
          />
          <TaskBtn w={145} active label="*logo36.svg - Inks..." icon={<Logo s={17} />} />
          <TaskBtn
            w={145}
            label="logo37-tutorial [Mo..."
            icon={
              <svg width="16" height="16" viewBox="0 0 16 16" className="shrink-0">
                <rect x="3" y="1" width="12" height="14" fill="#fff" stroke="#556" />
                <rect x="1" y="3" width="9" height="8" fill="#2a5fc8" />
                <path d="M11 6h3M11 8h3M4 13h9" stroke="#556" />
              </svg>
            }
          />
          <TaskBtn
            w={145}
            label="p09-1 - Paint"
            icon={
              <svg width="16" height="18" viewBox="0 0 16 18" className="shrink-0">
                <path d="M3 8h10l-1 9H4z" fill="#c8c0a0" stroke="#666" strokeWidth=".6" />
                <path d="M5 8L3 1M8 8V1M11 8l2-6" stroke="#d83020" strokeWidth="1.600" />
                <path d="M8 8V3" stroke="#30a040" strokeWidth="1.600" />
              </svg>
            }
          />
        </div>
        <div className="ml-[9px] flex h-[19px] w-[17px] shrink-0 items-center justify-center bg-[#3d6fd0] text-white">ES</div>
        <div className="ml-[19px] flex h-[30px] flex-1 items-center border-l border-[#0a3aa0] bg-[linear-gradient(180deg,#0c73d8_0%,#17a2f0_10%,#1290e8_80%,#0c70d0_100%)]">
          <div className="-ml-[10px] flex h-[19px] w-[19px] shrink-0 items-center justify-center rounded-full border border-white bg-[#2a6ce0]">
            <svg width="10" height="10" viewBox="0 0 10 10"><path d="M6.500 1.500L3 5l3.500 3.500" stroke="#fff" strokeWidth="2" fill="none" /></svg>
          </div>
          <svg width="17" height="18" viewBox="0 0 23 18" className="ml-[1px] shrink-0">
            <rect x="1" y="3" width="10" height="9" fill="#2b3a6a" stroke="#c8d8f0" strokeWidth=".6" />
            <path d="M2 16h8" stroke="#c8d8f0" strokeWidth="1.500" />
            <path d="M14 7c1 1 1 3 0 4M17 5c2 2 2 6 0 8M20 3c3 3 3 9 0 12" stroke="#7de84a" strokeWidth="1.300" fill="none" />
          </svg>
          <div className="ml-[2px] flex h-[16px] w-[16px] shrink-0 items-center justify-center rounded-full bg-[#e4effc] text-[12px] font-bold leading-none text-[#1a60c8]">i</div>
          <svg width="16" height="20" viewBox="0 0 22 20" className="ml-[2px] shrink-0">
            <path d="M2 1c0 6 1 10 5 12l9 3 4-1-1-3-8-3C8 7 5 5 5 1z" fill="#f4f4f4" stroke="#222" />
            <rect x="14" y="13" width="6" height="4" fill="#e8c830" stroke="#555" strokeWidth=".5" />
          </svg>
          <span className="ml-[7px] whitespace-nowrap text-white">08:25 p.m.</span>
        </div>
      </div>
    </div>
  );
}
